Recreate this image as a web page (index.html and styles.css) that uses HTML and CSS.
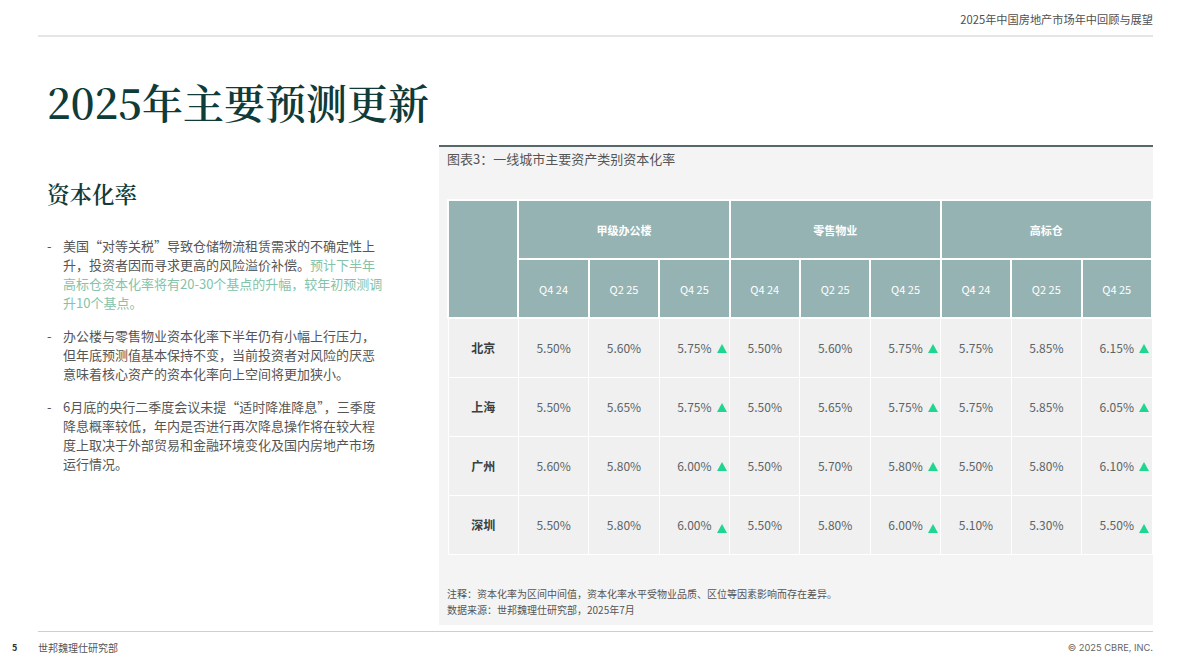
FILE: index.html
```html
<!DOCTYPE html>
<html lang="zh-CN">
<head>
<meta charset="utf-8">
<title>2025年主要预测更新</title>
<link rel="stylesheet" href="styles.css">
</head>
<body>
<div class="page">
  <header class="topbar"><span>2025年中国房地产市场年中回顾与展望</span></header>
  <main class="content">
    <section class="left">
      <h1 class="title">2025年主要预测更新</h1>
      <h2 class="subtitle">资本化率</h2>
      <ul class="bullets">
        <li><span class="dash">-</span><p>美国“对等关税”导致仓储物流租赁需求的不确定性上升，投资者因而寻求更高的风险溢价补偿。<span class="hl">预计下半年高标仓资本化率将有20-30个基点的升幅，较年初预测调升10个基点。</span></p></li>
        <li><span class="dash">-</span><p>办公楼与零售物业资本化率下半年仍有小幅上行压力，但年底预测值基本保持不变，当前投资者对风险的厌恶意味着核心资产的资本化率向上空间将更加狭小。</p></li>
        <li><span class="dash">-</span><p>6月底的央行二季度会议未提“适时降准降息”，三季度降息概率较低，年内是否进行再次降息操作将在较大程度上取决于外部贸易和金融环境变化及国内房地产市场运行情况。</p></li>
      </ul>
    </section>
    <section class="panel">
      <div class="chart-title">图表3：一线城市主要资产类别资本化率</div>
      <table class="cap-table">
        <thead>
          <tr>
            <th rowspan="2"></th>
            <th colspan="3" class="group">甲级办公楼</th>
            <th colspan="3" class="group">零售物业</th>
            <th colspan="3" class="group">高标仓</th>
          </tr>
          <tr>
            <th>Q4 24</th><th>Q2 25</th><th>Q4 25</th>
            <th>Q4 24</th><th>Q2 25</th><th>Q4 25</th>
            <th>Q4 24</th><th>Q2 25</th><th>Q4 25</th>
          </tr>
        </thead>
        <tbody>
          <tr>
            <td class="city">北京</td>
            <td>5.50%</td><td>5.60%</td><td>5.75%<i class="up"></i></td>
            <td>5.50%</td><td>5.60%</td><td>5.75%<i class="up"></i></td>
            <td>5.75%</td><td>5.85%</td><td>6.15%<i class="up"></i></td>
          </tr>
          <tr>
            <td class="city">上海</td>
            <td>5.50%</td><td>5.65%</td><td>5.75%<i class="up"></i></td>
            <td>5.50%</td><td>5.65%</td><td>5.75%<i class="up"></i></td>
            <td>5.75%</td><td>5.85%</td><td>6.05%<i class="up"></i></td>
          </tr>
          <tr>
            <td class="city">广州</td>
            <td>5.60%</td><td>5.80%</td><td>6.00%<i class="up"></i></td>
            <td>5.50%</td><td>5.70%</td><td>5.80%<i class="up"></i></td>
            <td>5.50%</td><td>5.80%</td><td>6.10%<i class="up"></i></td>
          </tr>
          <tr>
            <td class="city">深圳</td>
            <td>5.50%</td><td>5.80%</td><td>6.00%<i class="up low"></i></td>
            <td>5.50%</td><td>5.80%</td><td>6.00%<i class="up low"></i></td>
            <td>5.10%</td><td>5.30%</td><td>5.50%<i class="up low"></i></td>
          </tr>
        </tbody>
      </table>
      <div class="notes">
        <p>注释：资本化率为区间中间值，资本化率水平受物业品质、区位等因素影响而存在差异。</p>
        <p>数据来源：世邦魏理仕研究部，2025年7月</p>
      </div>
    </section>
  </main>
  <footer class="footer">
    <span class="pnum">5</span>
    <span class="dept">世邦魏理仕研究部</span>
    <span class="copy">© 2025 CBRE, INC.</span>
  </footer>
</div>
</body>
</html>
```
FILE: styles.css
```css
* { box-sizing: border-box; }
html, body { margin: 0; padding: 0; background: #fff; }
body {
  font-family: "Noto Sans CJK SC", "Noto Sans", sans-serif;
  color: #555;
}
.page {
  width: 1190px;
  height: 669px;
  padding: 0 37px 0 38px;
  display: flex;
  flex-direction: column;
  overflow: hidden;
}
.topbar {
  height: 37px;
  border-bottom: 2px solid #e5e5e5;
  display: flex;
  justify-content: flex-end;
  align-items: flex-start;
  padding-top: 11px;
  font-size: 11.2px;
  line-height: 16px;
  color: #4f4f4f;
}
.content {
  display: flex;
  height: 594px;
}
.left {
  width: 401px;
  padding-left: 9px;
}
.title {
  margin: 39px 0 0;
  font-family: "Noto Serif CJK SC", "Liberation Serif", "Noto Sans CJK SC", serif;
  font-weight: 600;
  font-size: 41px;
  line-height: 52px;
  color: #0f3b38;
  white-space: nowrap;
}
.subtitle {
  margin: 50px 0 0;
  font-family: "Noto Serif CJK SC", "Liberation Serif", "Noto Sans CJK SC", serif;
  font-weight: 600;
  font-size: 22.5px;
  line-height: 30px;
  color: #0f3b38;
}
.bullets {
  list-style: none;
  margin: 28px 0 0;
  padding: 0;
}
.bullets li {
  display: flex;
  margin-bottom: 14px;
  font-size: 13px;
  line-height: 19px;
  color: #555;
}
.bullets .dash {
  width: 16px;
  flex: none;
}
.bullets p {
  margin: 0;
  width: 323px;
}
.hl { color: #84c3a9; }

.panel {
  margin-top: 108px;
  width: 714px;
  height: 480px;
  background: #f4f4f4;
  border-top: 2px solid #566869;
  padding: 0 0 0 8px;
}
.chart-title {
  padding-top: 3px;
  font-size: 13px;
  line-height: 18px;
  color: #555;
}
.cap-table {
  margin-top: 31px;
  width: 706px;
  table-layout: fixed;
  border-collapse: collapse;
  font-size: 12px;
}
.cap-table th,
.cap-table td {
  border: 1px solid #fff;
  height: 59px;
  text-align: center;
  vertical-align: middle;
  padding: 0;
}
.cap-table th {
  background: #96b3b4;
  color: #fff;
  font-weight: 400;
  font-size: 11px;
  border-width: 2px;
}
.cap-table th.group { font-weight: 700; }
.cap-table td {
  background: #f0f0f0;
  color: #5b6466;
}
.cap-table td.city {
  font-weight: 700;
  color: #3a3f40;
}
.up {
  display: inline-block;
  width: 0;
  height: 0;
  margin-left: 5px;
  margin-right: -15px;
  border-left: 5px solid transparent;
  border-right: 5px solid transparent;
  border-bottom: 9px solid #1fd690;
  vertical-align: 0;
}
.up.low { vertical-align: -3px; }
.notes {
  margin-top: 31px;
  font-size: 10px;
  line-height: 16px;
  color: #555;
}
.notes p { margin: 0; }

.footer {
  border-top: 1px solid #cfcfcf;
  height: 38px;
  display: flex;
  align-items: flex-start;
  padding-top: 10px;
  font-size: 10px;
  line-height: 12px;
  color: #555;
}
.pnum {
  margin-left: -26px;
  width: 26px;
  font-weight: 700;
  font-size: 9px;
  color: #333;
}
.dept { flex: 1; }
.copy { font-family: "Inter", "Liberation Sans", sans-serif; font-size: 9.3px; color: #666; }
```
